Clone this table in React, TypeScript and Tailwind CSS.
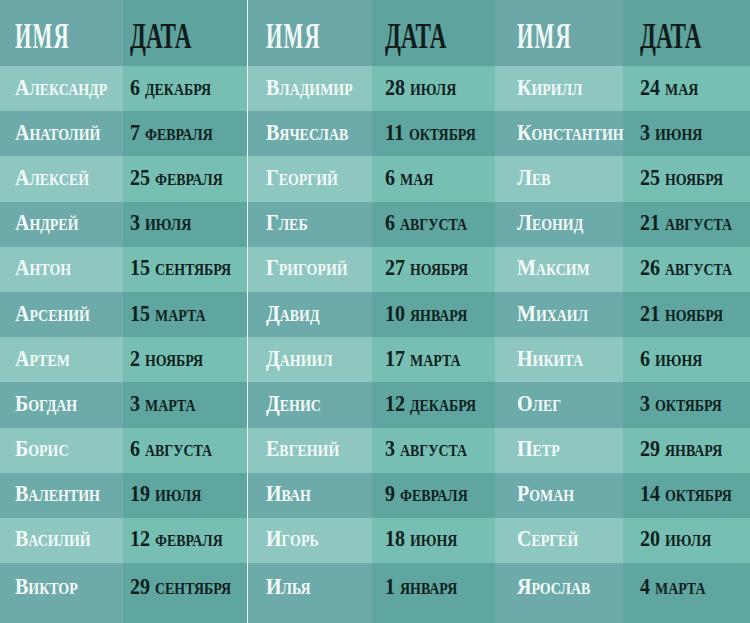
const groups: [string, string][][] = [
  [
    ['Александр', '6 декабря'],
    ['Анатолий', '7 февраля'],
    ['Алексей', '25 февраля'],
    ['Андрей', '3 июля'],
    ['Антон', '15 сентября'],
    ['Арсений', '15 марта'],
    ['Артем', '2 ноября'],
    ['Богдан', '3 марта'],
    ['Борис', '6 августа'],
    ['Валентин', '19 июля'],
    ['Василий', '12 февраля'],
    ['Виктор', '29 сентября'],
  ],
  [
    ['Владимир', '28 июля'],
    ['Вячеслав', '11 октября'],
    ['Георгий', '6 мая'],
    ['Глеб', '6 августа'],
    ['Григорий', '27 ноября'],
    ['Давид', '10 января'],
    ['Даниил', '17 марта'],
    ['Денис', '12 декабря'],
    ['Евгений', '3 августа'],
    ['Иван', '9 февраля'],
    ['Игорь', '18 июня'],
    ['Илья', '1 января'],
  ],
  [
    ['Кирилл', '24 мая'],
    ['Константин', '3 июня'],
    ['Лев', '25 ноября'],
    ['Леонид', '21 августа'],
    ['Максим', '26 августа'],
    ['Михаил', '21 ноября'],
    ['Никита', '6 июня'],
    ['Олег', '3 октября'],
    ['Петр', '29 января'],
    ['Роман', '14 октября'],
    ['Сергей', '20 июля'],
    ['Ярослав', '4 марта'],
  ],
];

// per-group column widths and text offsets
const layout = [
  { name: 'w-[123px] pl-[15px]', date: 'w-[124px] pl-[7px]' },
  { name: 'w-[124px] pl-[18px]', date: 'w-[123px] pl-[13px]' },
  { name: 'w-[128px] pl-[22px]', date: 'w-[127px] pl-[17px]' },
];

const font = "font-['Liberation_Serif',serif] font-bold";

function Cell({ className, children, text }: { className: string; children: string; text: string }) {
  return (
    <div className={`flex items-center overflow-visible ${className}`}>
      <span className={`inline-block origin-left leading-none ${text}`}>{children}</span>
    </div>
  );
}

const rowText = 'scale-x-[0.87] text-[23px] [font-variant:small-caps]';

function Group({ rows, idx }: { rows: [string, string][]; idx: number }) {
  const l = layout[idx];
  return (
    <div className="flex flex-col">
      <div className="flex h-[66px] shrink-0">
        <Cell text="scale-x-[0.6] text-[35px] tracking-[2px]" className={`${l.name} pt-[6px] bg-[#6ca8a7] text-[#f2faf7]`}>
          ИМЯ
        </Cell>
        <Cell text="scale-x-[0.66] text-[35px]" className={`${l.date} pt-[6px] bg-[#5ea39d] text-[#111c1b]`}>
          ДАТА
        </Cell>
      </div>
      {rows.map(([n, d], i) => {
        const light = i % 2 === 0;
        const last = i === rows.length - 1;
        const pos = last ? 'items-start pt-[12px]' : 'pb-[3px]';
        return (
          <div key={n} className={`flex ${last ? 'flex-1' : 'h-[45.2px] shrink-0'}`}>
            <Cell text={rowText} className={`${l.name} ${pos} ${light ? 'bg-[#8dc7c0]' : 'bg-[#6dabaa]'} text-[#f4fbf8]`}>
              {n}
            </Cell>
            <Cell text={rowText} className={`${l.date} ${pos} ${light ? 'bg-[#77bfb3]' : 'bg-[#5ea69f]'} text-[#0f1f1e]`}>
              {d}
            </Cell>
          </div>
        );
      })}
    </div>
  );
}

export default function App() {
  return (
    <div className={`flex h-[623px] w-[750px] overflow-hidden whitespace-nowrap ${font}`}>
      <Group rows={groups[0]} idx={0} />
      <div className="w-px bg-[#eef8f6]" />
      <Group rows={groups[1]} idx={1} />
      <Group rows={groups[2]} idx={2} />
    </div>
  );
}
